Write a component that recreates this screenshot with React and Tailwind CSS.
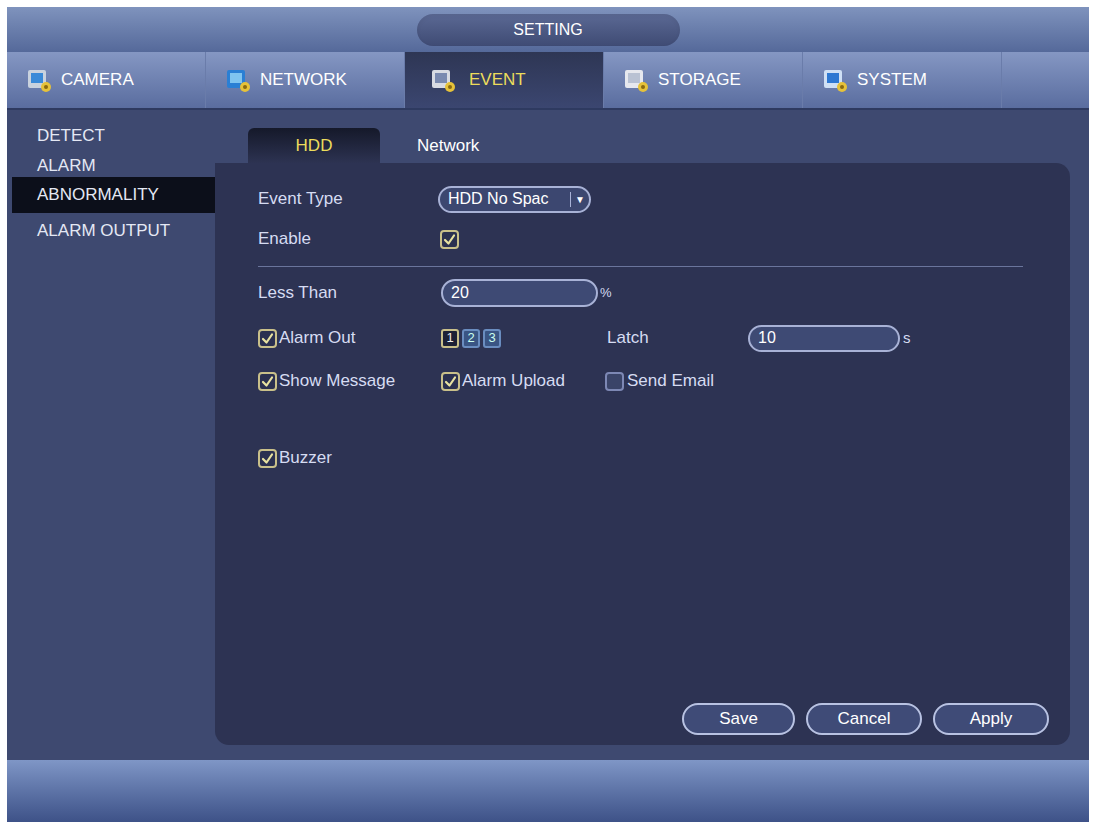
import React from "react";

const Check = ({ on = true }) => (
  <span className={`inline-flex items-center justify-center w-[19px] h-[19px] rounded-[4px] border-2 ${on ? "border-[#c9c08a] bg-[#2a3050]" : "border-[#7d88b4] bg-[#3a4468]"}`}>
    {on && (
      <svg width="13" height="13" viewBox="0 0 13 13"><path d="M2 7 L5.5 10.5 L11 2.5" stroke="#e8e2a0" strokeWidth="2.2" fill="none" strokeLinecap="round" strokeLinejoin="round" /></svg>
    )}
  </span>
);

const Num = ({ n, on }) => (
  <span className={`inline-flex items-center justify-center w-[18px] h-[19px] rounded-[3px] border-2 text-[13px] ${on ? "border-[#c9c08a] bg-[#1d2136] text-[#eee]" : "border-[#6a8dc0] bg-[#3a5584] text-[#cfe]"}`}>{n}</span>
);

const TabIcon = ({ c1, c2 }) => (
  <svg width="28" height="26" viewBox="0 0 28 26">
    <rect x="3" y="3" width="18" height="18" rx="2" fill={c1} />
    <rect x="6" y="6" width="12" height="10" fill={c2} />
    <circle cx="21" cy="20" r="5" fill="#e6c23a" />
    <circle cx="21" cy="20" r="2" fill="#8a6a10" />
  </svg>
);

export default function App() {
  const tabs = [
    { t: "CAMERA", c1: "#c9d2de", c2: "#3a8ad8" },
    { t: "NETWORK", c1: "#2a7fd4", c2: "#7fc4f0" },
    { t: "EVENT", c1: "#d8dbe3", c2: "#7a8ab0", active: true },
    { t: "STORAGE", c1: "#e6e8ee", c2: "#b9c2d3" },
    { t: "SYSTEM", c1: "#cfe0f5", c2: "#2e78d2" },
  ];
  const lbl = "text-[17px] text-[#d6dcf2]";
  return (
    <div className="w-[1095px] h-[826px] bg-white pt-[7px] pl-[7px]" style={{ fontFamily: '"Liberation Sans", Arial, sans-serif' }}>
      <div className="w-[1082px] h-[815px] flex flex-col bg-[#3e4970]">
        <div className="h-[45px] flex items-center justify-center bg-gradient-to-b from-[#7f93bd] to-[#55699a]">
          <div className="w-[263px] h-[32px] rounded-full bg-gradient-to-b from-[#5b6994] to-[#3f4b74] flex items-center justify-center text-[16px] text-white shadow-inner">SETTING</div>
        </div>
        <div className="h-[58px] flex bg-gradient-to-b from-[#8597c3] to-[#5a6d9f] border-b-2 border-[#2e3a60]">
          {tabs.map((x, i) => (
            <div key={i} className={`w-[199px] flex items-center gap-2 pl-[18px] text-[17px] border-r border-[#6a7caa] ${x.active ? "bg-gradient-to-b from-[#2e3654] to-[#3b4670] text-[#ecdc5c] pl-[24px] gap-3" : "text-white"}`}>
              <TabIcon c1={x.c1} c2={x.c2} />
              <span>{x.t}</span>
            </div>
          ))}
          <div className="flex-1" />
        </div>
        <div className="flex-1 flex">
          <div className="w-[208px] pt-[13px] text-[17px] text-[#e4e8f4]">
            <div className="pl-[30px] h-[26px]">DETECT</div>
            <div className="pl-[30px] h-[28px] pt-[4px]">ALARM</div>
            <div className="ml-[5px] pl-[25px] h-[36px] bg-[#0c0f1a] flex items-center">ABNORMALITY</div>
            <div className="pl-[30px] h-[36px] flex items-center">ALARM OUTPUT</div>
          </div>
          <div className="flex-1 flex flex-col pr-[19px] pb-[15px]">
            <div className="h-[53px] flex items-end">
              <div className="ml-[33px] w-[132px] h-[35px] rounded-t-md bg-gradient-to-b from-[#15192a] to-[#2d3352] text-[#ecdc5c] text-[17px] flex items-center justify-center">HDD</div>
              <div className="ml-[37px] h-[35px] text-[17px] text-white flex items-center">Network</div>
            </div>
            <div className="flex-1 rounded-[14px] rounded-tl-none bg-[#2d3353] relative px-[43px] pt-[22px]">
              <div className="flex items-center h-[28px]"><span className={`${lbl} w-[180px]`}>Event Type</span>
                <span className="h-[27px] w-[153px] rounded-full border-2 border-[#a8b2d6] bg-[#3c4770] text-[16px] text-white flex items-center pl-2 justify-between pr-1">HDD No Spac<span className="border-l border-[#a8b2d6] pl-1 text-[10px]">▼</span></span>
              </div>
              <div className="flex items-center h-[28px] mt-[12px]"><span className={`${lbl} w-[182px]`}>Enable</span><Check /></div>
              <div className="h-px bg-[#6a759c] mt-[13px] mr-[4px]" />
              <div className="flex items-center h-[28px] mt-[12px]"><span className={`${lbl} w-[183px]`}>Less Than</span>
                <span className="h-[28px] w-[157px] rounded-full border-2 border-[#a8b2d6] bg-[#3e4a74] text-[16px] text-white flex items-center pl-2">20</span>
                <span className="text-[13px] text-[#d6dcf2] ml-[2px]">%</span>
              </div>
              <div className="flex items-center h-[28px] mt-[17px]">
                <span className="w-[183px] flex items-center gap-[2px]"><Check /><span className={lbl}>Alarm Out</span></span>
                <span className="w-[166px] flex gap-[3px]"><Num n="1" on /><Num n="2" /><Num n="3" /></span>
                <span className={`${lbl} w-[141px]`}>Latch</span>
                <span className="h-[27px] w-[152px] rounded-full border-2 border-[#a8b2d6] bg-[#3e4a74] text-[16px] text-white flex items-center pl-2">10</span>
                <span className="text-[15px] text-[#d6dcf2] ml-[3px]">s</span>
              </div>
              <div className="flex items-center h-[28px] mt-[15px]">
                <span className="w-[183px] flex items-center gap-[2px]"><Check /><span className={lbl}>Show Message</span></span>
                <span className="w-[164px] flex items-center gap-[2px]"><Check /><span className={lbl}>Alarm Upload</span></span>
                <span className="flex items-center gap-[3px]"><Check on={false} /><span className={lbl}>Send Email</span></span>
              </div>
              <div className="flex items-center h-[28px] mt-[49px]">
                <span className="flex items-center gap-[2px]"><Check /><span className={lbl}>Buzzer</span></span>
              </div>
              <div className="absolute right-[21px] bottom-[10px] flex gap-[11px]">
                {[["Save", 113], ["Cancel", 116], ["Apply", 116]].map(([t, w]) => (
                  <span key={t} style={{ width: w }} className="h-[32px] rounded-full border-2 border-[#b8c2e2] bg-[#3f4b77] text-[17px] text-white flex items-center justify-center">{t}</span>
                ))}
              </div>
            </div>
          </div>
        </div>
        <div className="h-[62px] bg-gradient-to-b from-[#7f96c6] to-[#3e5288]" />
      </div>
    </div>
  );
}
